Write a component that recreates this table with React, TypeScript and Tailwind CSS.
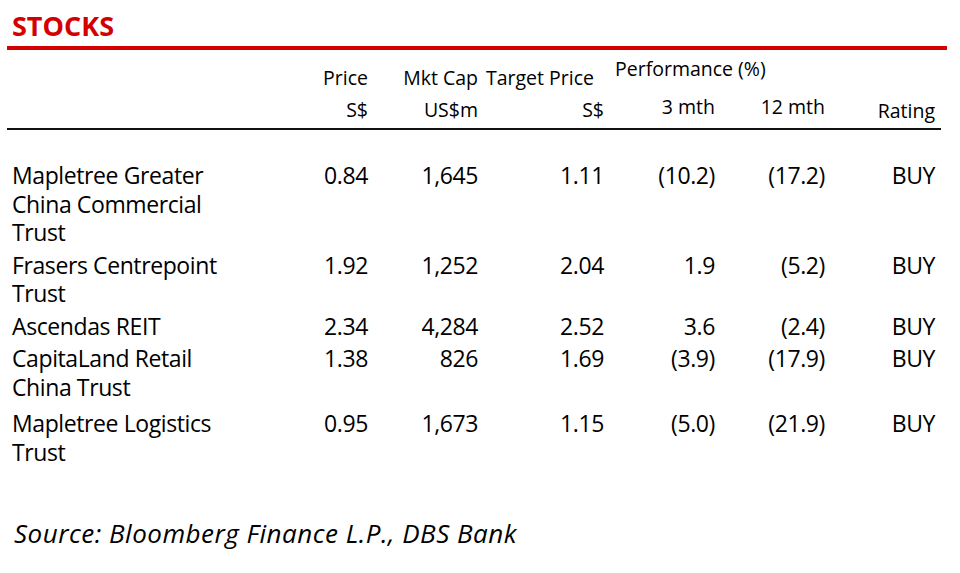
const rows = [
  { name: "Mapletree Greater China Commercial Trust", price: "0.84", cap: "1,645", target: "1.11", m3: "(10.2)", m12: "(17.2)", rating: "BUY", extra: "" },
  { name: "Frasers Centrepoint Trust", price: "1.92", cap: "1,252", target: "2.04", m3: "1.9", m12: "(5.2)", rating: "BUY", extra: "" },
  { name: "Ascendas REIT", price: "2.34", cap: "4,284", target: "2.52", m3: "3.6", m12: "(2.4)", rating: "BUY", extra: "" },
  { name: "CapitaLand Retail China Trust", price: "1.38", cap: "826", target: "1.69", m3: "(3.9)", m12: "(17.9)", rating: "BUY", extra: "" },
  { name: "Mapletree Logistics Trust", price: "0.95", cap: "1,673", target: "1.15", m3: "(5.0)", m12: "(21.9)", rating: "BUY", extra: "pt-[4px]" },
];

const cols = "grid grid-cols-[230px_126px_110px_126px_111px_110px_110px]";

export default function App() {
  return (
    <div className="w-[960px] h-[573px] bg-white text-black font-['Open_Sans',sans-serif] overflow-hidden">
      {/* Title */}
      <div className="px-[7px] pt-[9px]">
        <h1 className="pl-[5px] text-[27px] leading-[34px] font-bold text-[#d40000]">STOCKS</h1>
        <div className="mt-[3px] h-[4px] w-[940px] bg-[#d40000]" />
      </div>

      {/* Header */}
      <div className={`${cols} pl-[12px] text-[19.5px] leading-[24px]`}>
        <div />
        <div className="pt-[16px] text-right">Price</div>
        <div className="pt-[16px] text-right">Mkt Cap</div>
        <div className="pt-[16px] pr-[10px] text-right">Target Price</div>
        <div className="col-span-2 pt-[7px] pl-[11px]">Performance (%)</div>
        <div />
        <div />
        <div className="pt-[8px] text-right">S$</div>
        <div className="pt-[8px] text-right">US$m</div>
        <div className="pt-[8px] text-right">S$</div>
        <div className="pt-[5px] text-right">3 mth</div>
        <div className="pt-[5px] text-right">12 mth</div>
        <div className="pt-[9px] text-right">Rating</div>
      </div>
      <div className="ml-[7px] mt-[5px] h-[2px] w-[934px] bg-[#111]" />

      {/* Body */}
      <div className={`${cols} gap-y-[4px] pl-[12px] pt-[31px] text-[23px] leading-[28.5px] tracking-[-0.4px]`}>
        {rows.map((r) => (
          <div key={r.name} className="contents">
            <div className={`pr-[10px] ${r.extra}`}>{r.name}</div>
            <div className={`text-right ${r.extra}`}>{r.price}</div>
            <div className={`text-right ${r.extra}`}>{r.cap}</div>
            <div className={`text-right ${r.extra}`}>{r.target}</div>
            <div className={`text-right ${r.extra}`}>{r.m3}</div>
            <div className={`text-right ${r.extra}`}>{r.m12}</div>
            <div className={`text-right ${r.extra}`}>{r.rating}</div>
          </div>
        ))}
      </div>

      {/* Source */}
      <p className="mt-[50px] pl-[14px] text-[26px] leading-[34px] italic tracking-[0.5px]">
        Source: Bloomberg Finance L.P., DBS Bank
      </p>
    </div>
  );
}
